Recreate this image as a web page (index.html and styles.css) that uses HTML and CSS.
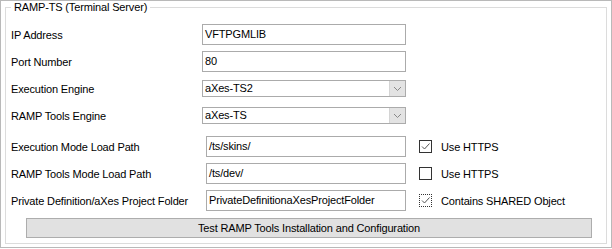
FILE: index.html
```html
<!DOCTYPE html>
<html lang="en">
<head>
  <meta charset="UTF-8" />
  <title>RAMP-TS (Terminal Server)</title>
  <link rel="stylesheet" href="styles.css">
</head>
<body>
  <div class="frame">
    <div class="group">
      <span class="group-title">RAMP-TS (Terminal Server)</span>

      <div class="rows">
        <div class="row">
          <label class="label">IP Address</label>
          <div class="textbox">VFTPGMLIB</div>
        </div>
        <div class="row">
          <label class="label">Port Number</label>
          <div class="textbox">80</div>
        </div>
        <div class="row">
          <label class="label">Execution Engine</label>
          <div class="combo"><span class="combo-text">aXes-TS2</span><span class="combo-btn"><svg width="9" height="6" viewBox="0 0 9 6"><polyline points="1,1 4.5,4.5 8,1" fill="none" stroke="#888" stroke-width="1"/></svg></span></div>
        </div>
        <div class="row">
          <label class="label">RAMP Tools Engine</label>
          <div class="combo"><span class="combo-text">aXes-TS</span><span class="combo-btn"><svg width="9" height="6" viewBox="0 0 9 6"><polyline points="1,1 4.5,4.5 8,1" fill="none" stroke="#888" stroke-width="1"/></svg></span></div>
        </div>
      </div>

      <div class="rows rows-lower">
        <div class="row">
          <label class="label wide">Execution Mode Load Path</label>
          <div class="textbox short">/ts/skins/</div>
          <span class="check checked"><svg width="11" height="11" viewBox="0 0 11 11"><polyline points="2,5.5 4.5,8 9.5,2.5" fill="none" stroke="#555" stroke-width="1"/></svg></span>
          <span class="check-label">Use HTTPS</span>
        </div>
        <div class="row">
          <label class="label wide">RAMP Tools Mode Load Path</label>
          <div class="textbox short">/ts/dev/</div>
          <span class="check"></span>
          <span class="check-label">Use HTTPS</span>
        </div>
        <div class="row">
          <label class="label wide">Private Definition/aXes Project Folder</label>
          <div class="textbox short">PrivateDefinitionaXesProjectFolder</div>
          <span class="check checked focused"><svg width="11" height="11" viewBox="0 0 11 11"><polyline points="2,5.5 4.5,8 9.5,2.5" fill="none" stroke="#555" stroke-width="1"/></svg></span>
          <span class="check-label">Contains SHARED Object</span>
        </div>
      </div>

      <button class="test-btn">Test RAMP Tools Installation and Configuration</button>
    </div>
  </div>
</body>
</html>
```

FILE: styles.css
```css
body {
  margin: 0;
  font-family: 'Liberation Sans', Arial, sans-serif;
  font-size: 11px;
  letter-spacing: -0.15px;
  color: #000;
  background: #fff;
}

.frame {
  width: 612px;
  height: 248px;
  box-sizing: border-box;
  border: 1px solid #b9b9b9;
  padding: 6px 4px 3px 4px;
}

.group {
  position: relative;
  height: 237px;
  box-sizing: border-box;
  border: 1px solid #dcdcdc;
  padding: 13px 5px 0 5px;
}

.group-title {
  position: absolute;
  top: -7px;
  left: 5px;
  padding: 0 3px;
  background: #fff;
  line-height: 13px;
}

.rows {
  display: flex;
  flex-direction: column;
}

.rows-lower {
  margin-top: 4px;
}

.row {
  display: flex;
  align-items: center;
  height: 27px;
}

.label {
  width: 191px;
  flex-shrink: 0;
}

.label.wide {
  width: 195px;
}

.textbox {
  width: 204px;
  height: 21px;
  box-sizing: border-box;
  border: 1px solid #ababab;
  padding: 0 2px;
  line-height: 19px;
  white-space: nowrap;
  overflow: hidden;
}

.textbox.short {
  width: 200px;
}

.combo {
  display: flex;
  width: 204px;
  height: 17px;
  box-sizing: border-box;
  border: 1px solid #ababab;
}

.combo-text {
  flex: 1;
  padding: 0 2px;
  line-height: 15px;
}

.combo-btn {
  width: 15px;
  background: #e3e3e3;
  border-left: 1px solid #d4d4d4;
  display: flex;
  align-items: center;
  justify-content: center;
}

.check {
  width: 13px;
  height: 13px;
  box-sizing: border-box;
  border: 1px solid #333;
  margin-left: 13px;
  display: flex;
  align-items: center;
  justify-content: center;
}

.check.focused {
  border: 1px dotted #333;
}

.check-label {
  margin-left: 9px;
}

.test-btn {
  display: block;
  margin: 4px 0 0 15px;
  width: 566px;
  height: 20px;
  padding: 0;
  font-family: inherit;
  font-size: 11px;
  letter-spacing: inherit;
  color: #000;
  background: #e1e1e1;
  border: 1px solid #adadad;
}
```
